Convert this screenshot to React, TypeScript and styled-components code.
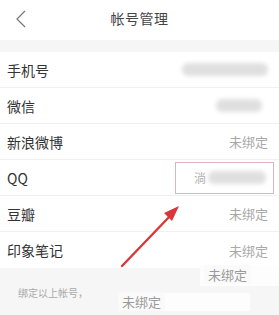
import styled, { createGlobalStyle } from "styled-components";

const GlobalStyle = createGlobalStyle`
  html, body {
    margin: 0;
    padding: 0;
    background: #ffffff;
    font-family: "Noto Sans CJK SC", "Noto Sans", sans-serif;
  }
`;

const Page = styled.div`
  position: relative;
  width: 279px;
  height: 315px;
  overflow: hidden;
  background: #f6f6f6;
  display: flex;
  flex-direction: column;
`;

const Header = styled.div`
  height: 40px;
  background: #fff;
  display: flex;
  align-items: center;
  justify-content: center;
  position: relative;
`;

const Back = styled.div`
  position: absolute;
  left: 15px;
  top: 10px;
  width: 12px;
  height: 18px;
  display: flex;
`;

const Title = styled.h1`
  margin: 0;
  font-size: 14px;
  font-weight: 400;
  color: #444;
  letter-spacing: 0.5px;
  margin-top: -4px;
`;

const Band = styled.div`
  height: 12px;
  background: #f6f6f6;
`;

const List = styled.ul`
  margin: 0;
  padding: 0;
  list-style: none;
  background: #fff;
`;

const Row = styled.li`
  height: 36px;
  padding: 0 11px 0 7px;
  display: flex;
  align-items: center;
  justify-content: space-between;
  border-bottom: 1px solid #f0f0f0;
  box-sizing: border-box;
  &:last-child {
    border-bottom: none;
  }
`;

const Label = styled.span`
  font-size: 14px;
  color: #333;
`;

const Value = styled.span`
  font-size: 13px;
  color: #a8a8a8;
`;

const Blur = styled.div<{ $w: number; $h: number; $mr?: number }>`
  width: ${(p) => p.$w}px;
  height: ${(p) => p.$h}px;
  margin-right: ${(p) => p.$mr ?? 0}px;
  background: #d8d8d8;
  border-radius: 6px;
  filter: blur(2px);
  opacity: 0.8;
`;

const Framed = styled.div`
  width: 99px;
  height: 32px;
  margin-right: -6px;
  box-sizing: border-box;
  border: 1px solid #d8b8b8;
  display: flex;
  align-items: center;
  padding-left: 18px;
  gap: 2px;
`;

const FaintChar = styled.span`
  font-size: 12px;
  color: #b0b0b0;
`;

const Footer = styled.div`
  flex: 1;
  background: #f6f6f6;
  padding: 17px 0 0 18px;
`;

const Hint = styled.p`
  margin: 0;
  font-size: 10px;
  color: #a9a9a9;
`;

const Stray = styled.span<{ $x: number; $y: number }>`
  position: absolute;
  left: ${(p) => p.$x}px;
  top: ${(p) => p.$y}px;
  font-size: 13px;
  color: #9a9a9a;
  background: #fafafa;
  padding: 0 4px;
`;

const Patch = styled.div<{ $x: number; $y: number; $w: number; $h: number }>`
  position: absolute;
  left: ${(p) => p.$x}px;
  top: ${(p) => p.$y}px;
  width: ${(p) => p.$w}px;
  height: ${(p) => p.$h}px;
  background: #fdfdfd;
`;

const Arrow = styled.svg`
  position: absolute;
  left: 0;
  top: 0;
  pointer-events: none;
`;

export default function App() {
  return (
    <>
      <GlobalStyle />
      <Page>
        <Header>
          <Back>
            <svg width="12" height="18" viewBox="0 0 12 18">
              <path d="M10 1 L2 9 L10 17" fill="none" stroke="#777" strokeWidth="1.2" />
            </svg>
          </Back>
          <Title>帐号管理</Title>
        </Header>
        <Band />
        <List>
          <Row>
            <Label>手机号</Label>
            <Blur $w={86} $h={13} />
          </Row>
          <Row>
            <Label>微信</Label>
            <Blur $w={46} $h={13} $mr={6} />
          </Row>
          <Row>
            <Label>新浪微博</Label>
            <Value>未绑定</Value>
          </Row>
          <Row>
            <Label>QQ</Label>
            <Framed>
              <FaintChar>淌</FaintChar>
              <Blur $w={58} $h={13} />
            </Framed>
          </Row>
          <Row>
            <Label>豆瓣</Label>
            <Value>未绑定</Value>
          </Row>
          <Row>
            <Label>印象笔记</Label>
            <Value>未绑定</Value>
          </Row>
        </List>
        <Footer>
          <Hint>绑定以上帐号，</Hint>
        </Footer>
        <Patch $x={200} $y={266} $w={79} $h={20} />
        <Stray $x={204} $y={265}>未绑定</Stray>
        <Patch $x={165} $y={293} $w={85} $h={18} />
        <Stray $x={118} $y={292}>未绑定</Stray>
        <Arrow width="279" height="315" viewBox="0 0 279 315">
          <path d="M122 266 L171 215" stroke="#d8383a" strokeWidth="2.4" strokeLinecap="round" />
          <path d="M179 206 L164 213 L172 221 Z" fill="#d8383a" />
        </Arrow>
      </Page>
    </>
  );
}
